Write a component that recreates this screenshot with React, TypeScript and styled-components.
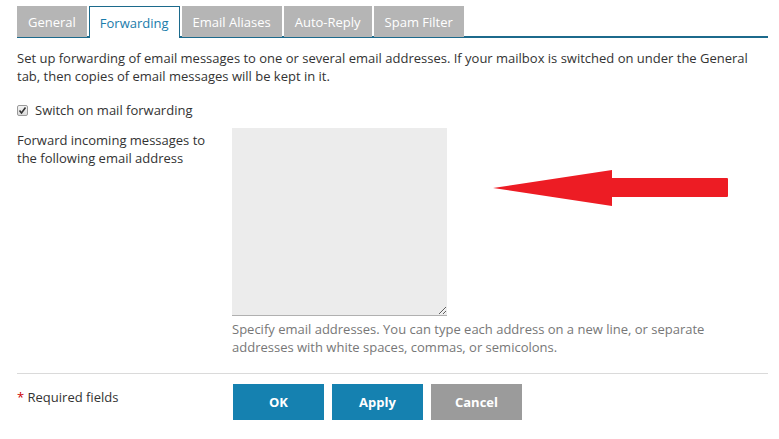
import React from "react";
import styled, { createGlobalStyle } from "styled-components";

const Global = createGlobalStyle`
  html, body { margin: 0; padding: 0; background: #fff; }
  body { font-family: "Open Sans", "Liberation Sans", sans-serif; font-size: 13px; color: #333; }
  * { box-sizing: border-box; }
`;

const Page = styled.div`
  position: relative;
  width: 779px;
  height: 439px;
  padding: 6px 11px 0 17px;
`;

const TabBar = styled.div`
  display: flex;
  gap: 2px;
  border-bottom: 2px solid #1c6a8c;
  height: 32px;
`;

const Tab = styled.div<{ $active?: boolean }>`
  padding: 0 10px;
  display: flex;
  align-items: center;
  background: ${(p) => (p.$active ? "#fff" : "#b5b5b5")};
  color: ${(p) => (p.$active ? "#1a7cab" : "#fff")};
  border: ${(p) => (p.$active ? "1px solid #1c6a8c" : "1px solid transparent")};
  border-bottom: none;
  margin-bottom: ${(p) => (p.$active ? "-1px" : "0")};
  height: ${(p) => (p.$active ? "32px" : "31px")};
`;

const Intro = styled.p`
  margin: 11px 0 0;
  line-height: 18px;
  width: 745px;
`;

const CheckRow = styled.label`
  display: flex;
  align-items: center;
  gap: 7px;
  margin-top: 16px;
  height: 18px;
`;

const Box = styled.span`
  width: 11px;
  height: 11px;
  border: 1px solid #9a9a9a;
  border-radius: 2px;
  background: linear-gradient(#f4f4f4, #dcdcdc);
  display: flex;
  align-items: center;
  justify-content: center;
`;

const FieldRow = styled.div`
  display: grid;
  grid-template-columns: 215px 1fr;
  margin-top: 9px;
`;

const FieldLabel = styled.div`
  line-height: 18px;
  padding-top: 3px;
`;

const Area = styled.textarea`
  display: block;
  width: 215px;
  height: 188px;
  background: #ececec;
  border: none;
  border-bottom: 1px solid #b0b0b0;
  margin: 0;
  resize: both;
`;

const Hint = styled.div`
  color: #777;
  line-height: 18px;
  margin-top: 4px;
  width: 520px;
`;

const Divider = styled.hr`
  border: none;
  border-top: 1px solid #dadada;
  margin: 17px 0 0;
`;

const Footer = styled.div`
  display: grid;
  grid-template-columns: 216px 1fr;
  margin-top: 10px;
`;

const Required = styled.div`
  padding-top: 4px;
  line-height: 18px;
  span { color: #c00; }
`;

const Buttons = styled.div`
  display: flex;
  gap: 8px;
`;

const Btn = styled.button<{ $gray?: boolean }>`
  width: 91px;
  height: 36px;
  border: none;
  background: ${(p) => (p.$gray ? "#9b9b9b" : "#1581b0")};
  color: #fff;
  font-family: inherit;
  font-size: 13px;
  font-weight: 700;
`;

const Arrow = styled.svg`
  position: absolute;
  left: 490px;
  top: 168px;
`;

export default function App() {
  return (
    <>
      <Global />
      <Page>
        <TabBar>
          <Tab>General</Tab>
          <Tab $active>Forwarding</Tab>
          <Tab>Email Aliases</Tab>
          <Tab>Auto-Reply</Tab>
          <Tab>Spam Filter</Tab>
        </TabBar>
        <Intro>
          Set up forwarding of email messages to one or several email addresses. If your mailbox is switched on under the General tab, then copies of email messages will be kept in it.
        </Intro>
        <CheckRow>
          <Box>
            <svg width="9" height="9" viewBox="0 0 9 9">
              <path d="M1.5 4.5 L3.5 7 L7.5 1.5" fill="none" stroke="#333" strokeWidth="1.6" />
            </svg>
          </Box>
          Switch on mail forwarding
        </CheckRow>
        <FieldRow>
          <FieldLabel>
            Forward incoming messages to
            <br />
            the following email address
          </FieldLabel>
          <div>
            <Area />
            <Hint>
              Specify email addresses. You can type each address on a new line, or separate addresses with white spaces, commas, or semicolons.
            </Hint>
          </div>
        </FieldRow>
        <Divider />
        <Footer>
          <Required>
            <span>*</span> Required fields
          </Required>
          <Buttons>
            <Btn>OK</Btn>
            <Btn>Apply</Btn>
            <Btn $gray>Cancel</Btn>
          </Buttons>
        </Footer>
        <Arrow width="242" height="40" viewBox="0 0 242 40">
          <path d="M3 20 L122 2 L122 10 L237 10 Q238 10 238 11 L238 28 Q238 29 237 29 L122 29 L122 38 Z" fill="#ed1c24" />
        </Arrow>
      </Page>
    </>
  );
}
